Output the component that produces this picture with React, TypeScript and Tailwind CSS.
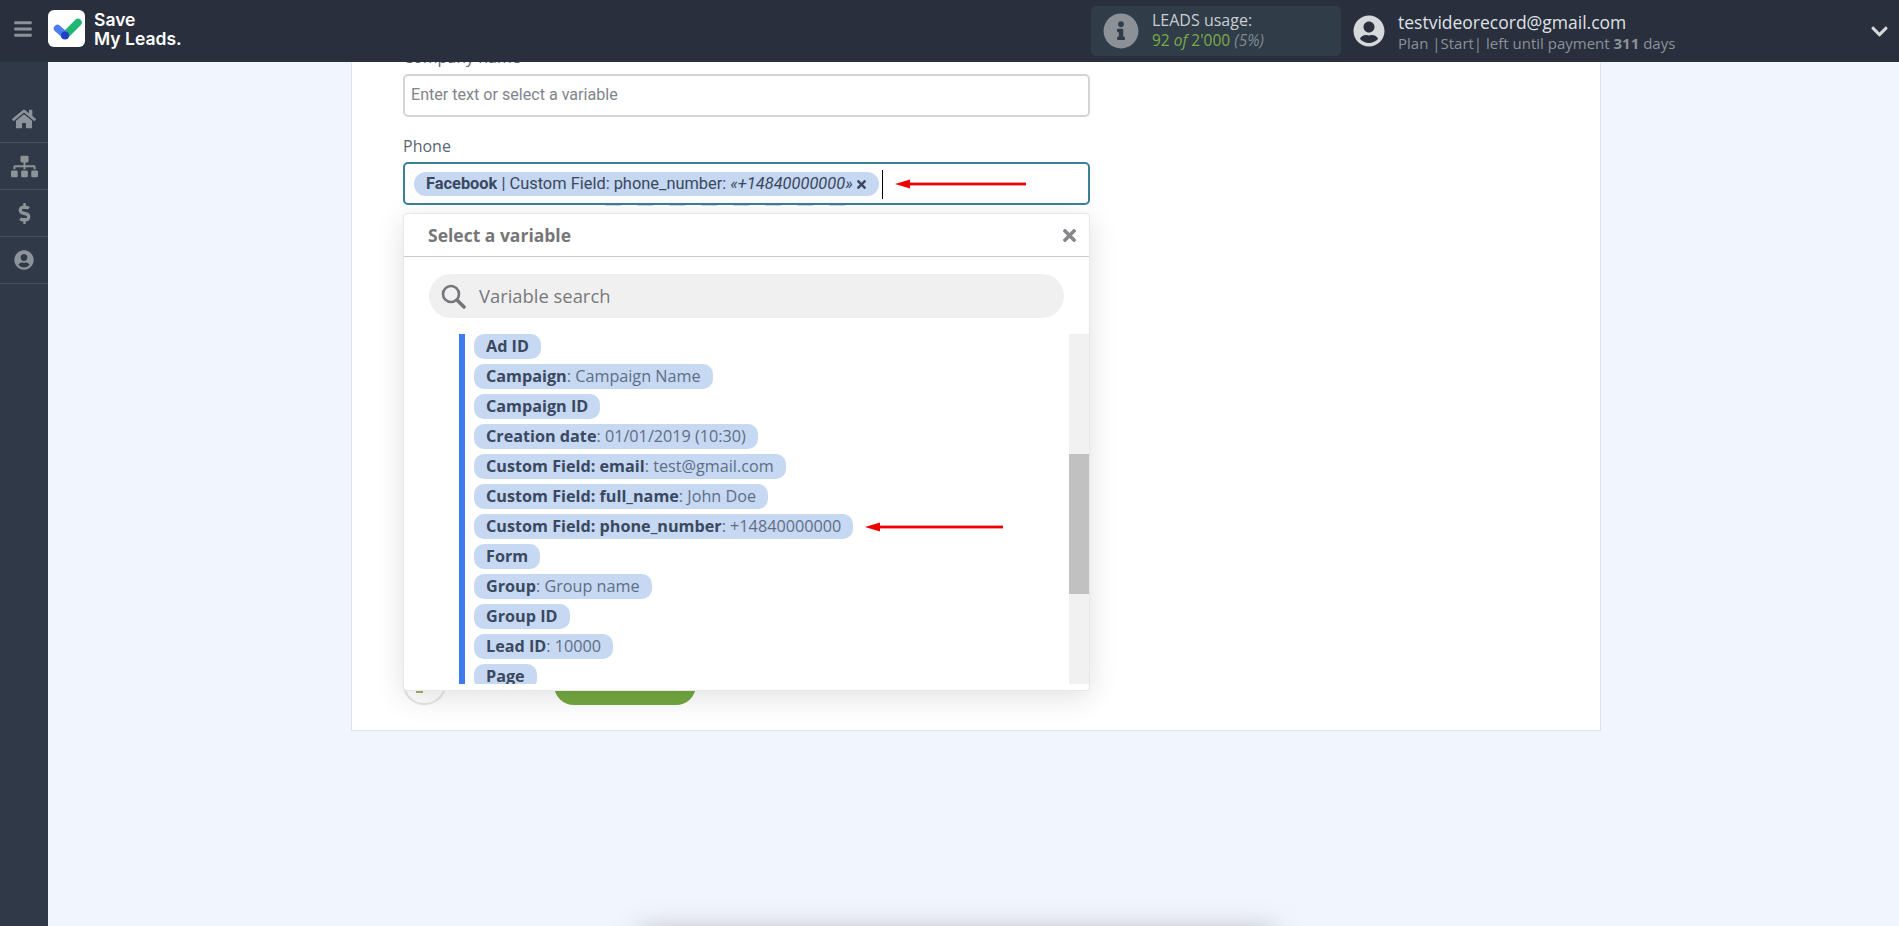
import { FaHome, FaSitemap, FaDollarSign, FaUserCircle, FaInfoCircle, FaChevronDown, FaTimes, FaBars } from 'react-icons/fa';

const chips = [
  { name: 'Ad ID' },
  { name: 'Campaign', value: 'Campaign Name' },
  { name: 'Campaign ID' },
  { name: 'Creation date', value: '01/01/2019 (10:30)' },
  { name: 'Custom Field: email', value: 'test@gmail.com' },
  { name: 'Custom Field: full_name', value: 'John Doe' },
  { name: 'Custom Field: phone_number', value: '+14840000000', marked: true },
  { name: 'Form' },
  { name: 'Group', value: 'Group name' },
  { name: 'Group ID' },
  { name: 'Lead ID', value: '10000' },
  { name: 'Page' },
];

function RedArrow({ width }: { width: number }) {
  return (
    <svg width={width} height="12" viewBox={`0 0 ${width} 12`} className="shrink-0">
      <rect x="12" y="4.6" width={width - 12} height="2.8" fill="#ee0000" />
      <polygon points="0,6 15,1.5 15,10.5" fill="#ee0000" />
    </svg>
  );
}

function Logo() {
  return (
    <div className="w-[37px] h-[37px] rounded-[6px] bg-white shrink-0 -mt-[5px]">
      <svg width="37" height="37" viewBox="0 0 37 37">
        <line x1="17.5" y1="25" x2="30" y2="12.5" stroke="#22b573" strokeWidth="7.5" strokeLinecap="round" />
        <line x1="9.5" y1="18.5" x2="17" y2="25" stroke="#4a7df0" strokeWidth="7.5" strokeLinecap="round" />
        <circle cx="17" cy="25.5" r="4" fill="#1f3fc4" />
      </svg>
    </div>
  );
}

function Header() {
  return (
    <header className="relative z-10 h-[62px] shrink-0 bg-[#292f3c] flex items-center">
      <FaBars className="ml-[13px] -mt-[5px] text-[#8c929c] text-[20px] shrink-0" />
      <div className="ml-[15px]">
        <Logo />
      </div>
      <div className="ml-[9px] w-[100px] -mt-[5px] font-['Inter',sans-serif] font-semibold text-white text-[17.5px] leading-[19px]">
        <div>Save</div>
        <div>My Leads.</div>
      </div>
      <div className="ml-[897px] w-[250px] h-[50px] rounded-[5px] bg-[#303c48] flex items-center pl-[12px] font-['Open_Sans',sans-serif]">
        <FaInfoCircle className="text-[#8b9196] text-[36px] shrink-0" />
        <div className="ml-[13px] -mt-[2px]">
          <div className="text-[#c9ced3] text-[16px] leading-[20px]">LEADS usage:</div>
          <div className="text-[15.5px] leading-[20px] text-[#7c8b93] italic">
            <span className="text-[#7cab4b] not-italic">92 </span>
            <span className="text-[#7cab4b]">of</span>
            <span className="text-[#7cab4b] not-italic"> 2'000</span> (5%)
          </div>
        </div>
      </div>
      <FaUserCircle className="ml-[12px] text-[#d6d8db] text-[32px] shrink-0" />
      <div className="ml-[13px] font-['Open_Sans',sans-serif]">
        <div className="text-[#dfe2e5] text-[17.5px] leading-[24px]">testvideorecord@gmail.com</div>
        <div className="text-[#8b929a] text-[15px] leading-[19px]">
          Plan |Start| left until payment <b className="font-bold">311</b> days
        </div>
      </div>
      <FaChevronDown className="ml-auto mr-[10px] text-[#d6d8db] text-[19px]" />
    </header>
  );
}

function Sidebar() {
  const rows = [
    <FaHome className="text-[24px]" />,
    <FaSitemap className="text-[27px]" />,
    <FaDollarSign className="text-[21px]" />,
    <FaUserCircle className="text-[20px]" />,
  ];
  return (
    <aside className="w-12 shrink-0 bg-[#303948] pt-[34px]">
      {rows.map((icon, i) => (
        <div key={i} className="h-[47px] flex items-center justify-center border-b border-[#46505e] text-[#8d939b]">
          {icon}
        </div>
      ))}
    </aside>
  );
}

function VariableDropdown() {
  return (
    <div className="absolute left-[51px] top-[168px] w-[687px] h-[478px] bg-white border border-[#e6e7ea] rounded-[4px] shadow-[0_6px_30px_rgba(0,0,0,0.12)] font-['Open_Sans',sans-serif]">
      <div className="h-[43px] border-b border-[#c9cacc] flex items-center justify-between pl-[24px] pr-[10px]">
        <span className="font-bold text-[17.5px] text-[#75767a]">Select a variable</span>
        <FaTimes className="text-[#85878b] text-[19px]" />
      </div>
      <div className="mt-[17px] mx-[25px] h-[44px] rounded-[22px] bg-[#f0f0f0] flex items-center pl-[11px]">
        <svg width="26" height="26" viewBox="0 0 26 26" fill="none" stroke="#75767a" className="shrink-0">
          <circle cx="11" cy="11" r="8" strokeWidth="2.6" />
          <line x1="17" y1="17" x2="24" y2="24" strokeWidth="3.6" strokeLinecap="round" />
        </svg>
        <span className="ml-[13px] text-[18.4px] text-[#77797d]">Variable search</span>
      </div>
      <div className="mt-[16px] h-[350px] flex overflow-hidden">
        <div className="ml-[55px] w-[6px] h-full bg-[#3f7bf0] shrink-0" />
        <div className="ml-[9px] flex-1 flex flex-col items-start gap-[5px]">
          {chips.map((c) => (
            <div key={c.name} className="flex items-center shrink-0">
              <div className="h-[25px] flex items-center px-[12px] rounded-[10px] bg-[#c6d8f2] text-[16.2px] text-[#5e6e86] whitespace-nowrap">
                <span className="font-bold text-[#3a4860]">{c.name}</span>
                {c.value && <span>:&nbsp;{c.value}</span>}
              </div>
              {c.marked && (
                <div className="ml-[12px]">
                  <RedArrow width={138} />
                </div>
              )}
            </div>
          ))}
        </div>
        <div className="w-[20px] h-full bg-[#f1f1f1] shrink-0">
          <div className="mt-[120px] h-[140px] bg-[#c1c1c1]" />
        </div>
      </div>
    </div>
  );
}

function SettingsForm() {
  return (
    <div className="relative w-[789px] pl-[51px] pr-[51px] pb-[25px] -mt-[17px]">
      <div className="text-[16px] leading-[24px] text-[#5c6570] font-['Open_Sans',sans-serif]">Company name</div>
      <div className="mt-[5px] h-[43px] border-2 border-[#d2d4d8] rounded-[5px] flex items-center pl-[6px] font-['Roboto',sans-serif] text-[16.1px] text-[#80858b]">
        Enter text or select a variable
      </div>
      <div className="mt-[17px] text-[16px] leading-[24px] text-[#5c6570] font-['Open_Sans',sans-serif]">Phone</div>
      <div className="mt-[4px] h-[43px] border-2 border-[#3b8097] rounded-[5px] flex items-center pl-[9px] pt-[1px] font-['Roboto',sans-serif] text-[16.4px] text-[#3a4860]">
        <div className="h-[24px] flex items-center pl-[12px] pr-[11px] rounded-[12px] bg-[#c5d7f1] whitespace-nowrap">
          <b className="font-bold">Facebook</b>
          <span>&nbsp;| Custom Field: phone_number:&nbsp;</span>
          <i>«+14840000000»</i>
          <FaTimes className="ml-[2px] text-[13px]" />
        </div>
        <div className="ml-[3px] w-px h-[29px] bg-black" />
        <div className="ml-[12px]">
          <RedArrow width={131} />
        </div>
      </div>
      <div className="absolute left-[253px] top-[160px] w-[241px] h-px bg-[repeating-linear-gradient(90deg,#cdd8df_0_16px,transparent_16px_32px)]" />
      <div className="mt-[458px] h-[42px] flex">
        <div className="w-[43px] h-[42px] rounded-full border-2 border-[#e4e4e4] flex items-end">
          <div className="ml-[11px] mb-[10px] w-[7px] h-[2px] bg-[#a8b060]" />
        </div>
        <div className="ml-[108px] w-[142px] h-[42px] rounded-[20px] bg-[#74a840]" />
      </div>
      <VariableDropdown />
    </div>
  );
}

export default function App() {
  return (
    <div className="h-screen w-full overflow-hidden flex flex-col bg-[#f1f5fd]">
      <Header />
      <div className="flex-1 min-h-0 flex">
        <Sidebar />
        <main className="flex-1 min-w-0 overflow-hidden">
          <section className="ml-[303px] w-[1250px] flow-root bg-white border-x border-b border-[#dfe3ea]">
            <SettingsForm />
          </section>
          <div className="ml-[592px] w-[635px] h-10 mt-[200px] bg-white shadow-[0_0_30px_rgba(0,0,0,0.25)]" />
        </main>
      </div>
    </div>
  );
}
